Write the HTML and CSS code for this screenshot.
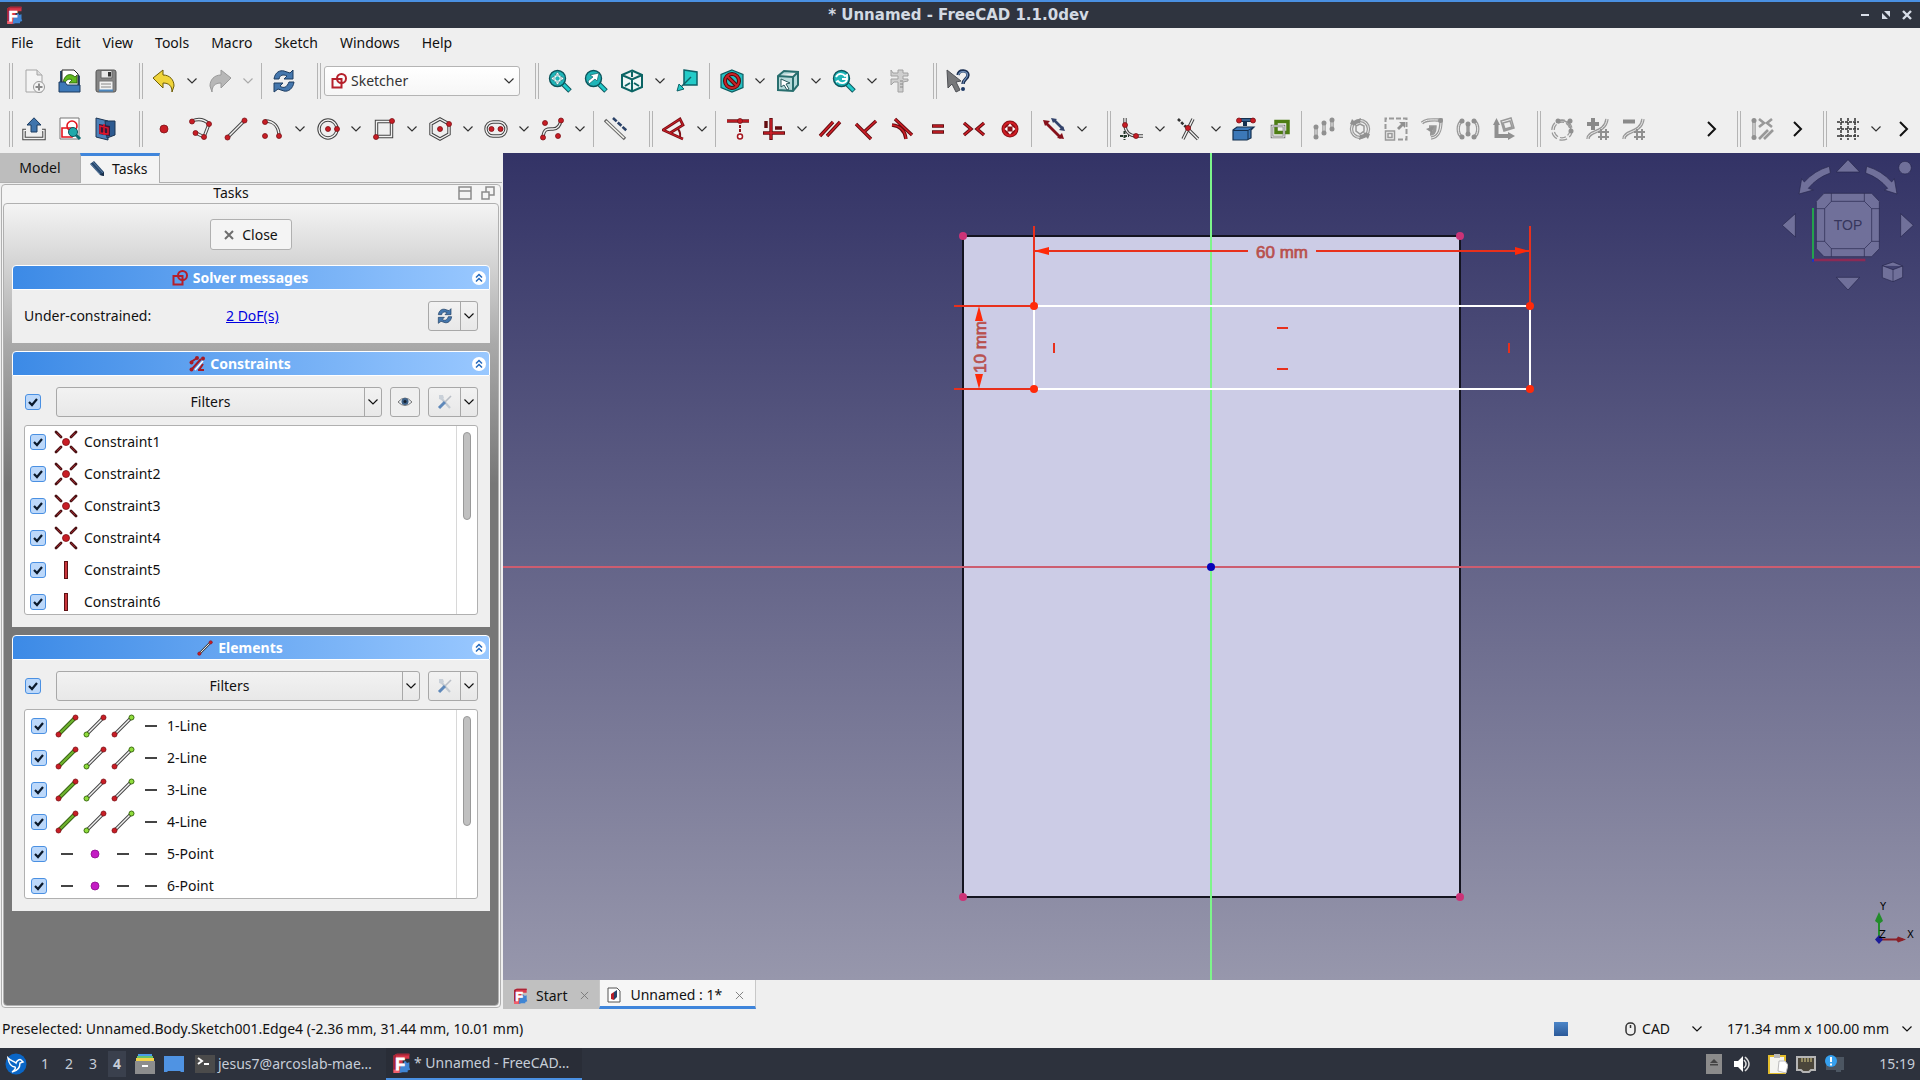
FILE: index.html
```
<!DOCTYPE html>
<html lang="en">

<head>
    <meta charset="UTF-8">
    <meta name="viewport" content="width=device-width, initial-scale=1.0">
    <title>* Unnamed - FreeCAD 1.1.0dev</title>
    <link rel="stylesheet" href="styles.css">
</head>

<body>

    <!-- Icon sprite -->
    <svg class="sprite" aria-hidden="true">
        <symbol id="i-chev" viewBox="0 0 12 12"><path d="M1.500 3.500l4.500 4.500 4.500-4.500" fill="none" stroke="currentColor" stroke-width="1.200"/></symbol>
        <symbol id="i-more" viewBox="0 0 16 18"><path d="M5 2l7 7-7 7" fill="none" stroke="#111" stroke-width="2"/></symbol>
        <symbol id="i-freecad" viewBox="0 0 24 24">
            <path d="M3 3l4-2h15v6h-8v15l-4 2H3z" fill="#d9364a"/><path d="M3 3l4-2h15v2H6v20H3z" fill="#a82636"/><path d="M12 13h3l1-3h2l1 2 3-1v6l1 3-3 1v2h-6l-4 1z" fill="#3f85d4"/><path d="M3 20h7v4H3z" fill="#f0606c"/>
            <text x="5" y="20" class="logo-letter">F</text>
        </symbol>
        <symbol id="i-new" viewBox="0 0 24 24"><path d="M4 1h11l5 5v17H4z" fill="#f4f4f4" stroke="#a5a5a5"/><path d="M15 1v5h5" fill="#ddd" stroke="#a5a5a5"/><circle cx="17" cy="18" r="5.500" fill="#f4f4f4" stroke="#999"/><path d="M17 14.500v7M13.500 18h7" stroke="#8a8a8a" stroke-width="2"/></symbol>
        <symbol id="i-open" viewBox="0 0 24 24"><path d="M2 2h14l6 5v16H2z" fill="#2b4d74"/><path d="M4 1h12l4 4v12H4z" fill="#fff" stroke="#222"/><path d="M5 14c1-8 7-11 12-6l2-2v8h-8l3-3c-3-2-6 0-7 3z" fill="#5fb81e" stroke="#285c08" stroke-width=".8"/><path d="M1 13h6l2 3h13v7H1z" fill="#3c78b8" stroke="#1c3a5e"/></symbol>
        <symbol id="i-save" viewBox="0 0 24 24"><path d="M2 3q0-2 2-2h16q2 0 2 2v18q0 2-2 2H4q-2 0-2-2z" fill="#858585" stroke="#555"/><path d="M7 1.500h11V9H7z" fill="#e8e8e8" stroke="#666"/><path d="M14 3h3v4.500h-3z" fill="#333"/><path d="M5 12h14v10H5z" fill="#f1f1f1" stroke="#777"/><path d="M7 15h10M7 18h10" stroke="#888"/><path d="M5 20.500h14v2H5z" fill="#4b86be"/></symbol>
        <symbol id="i-undo" viewBox="0 0 24 24"><path d="M1 9l10-8v5c7 0 11 5 11 11l-2 6c0-6-3-9-9-9v5z" fill="#f0d43a" stroke="#6d5c05"/></symbol>
        <symbol id="i-redo" viewBox="0 0 24 24"><path d="M23 9L13 1v5C6 6 2 11 2 17l2 6c0-6 3-9 9-9v5z" fill="#b7b7b7" stroke="#999"/></symbol>
        <symbol id="i-refresh" viewBox="0 0 24 24"><path d="M2 10c1-7 6-9 10-8l6 2 3-3v9h-9l3-3c-4-2-7-1-8 3z" fill="#4577ad" stroke="#1d3c61"/><path d="M22 13c-1 7-6 10-10 9l-6-2-4 3v-9h9l-3 3c4 3 7 1 9-4z" fill="#4577ad" stroke="#1d3c61"/></symbol>
        <symbol id="i-sketch" viewBox="0 0 16 16"><path d="M1.500 6h9v8.500h-9z" fill="none" stroke="#b51f2a" stroke-width="2"/><circle cx="10.500" cy="5.500" r="4.500" fill="none" stroke="#b51f2a" stroke-width="2"/></symbol>
        <symbol id="i-lens" viewBox="0 0 24 24"><path d="M14 14l8 8" stroke="#0b555c" stroke-width="5"/><path d="M14 14l7.500 7.500" stroke="#21c9c9" stroke-width="3"/><circle cx="9.500" cy="9.500" r="8" fill="#1fb5b8" stroke="#0b555c" stroke-width="1.400"/></symbol>
        <symbol id="i-fit" viewBox="0 0 24 24"><use href="#i-lens"/><circle cx="9.500" cy="9.500" r="3" fill="none" stroke="#fff" stroke-width="1.500"/><path d="M9.500 3l2.500 3H7zM9.500 16l2.500-3H7zM3 9.500L6 7v5zM16 9.500L13 7v5z" fill="#fff" stroke="#12656c" stroke-width=".6"/></symbol>
        <symbol id="i-fitsel" viewBox="0 0 24 24"><use href="#i-lens"/><path d="M5 15l-1-3 5-4-3-2 9-2-2 8-2-2z" fill="#fff" stroke="#12656c" stroke-width=".7"/></symbol>
        <symbol id="i-cube" viewBox="0 0 24 24"><path d="M12 1.500l10 4.500v12l-10 4.500L2 18V6zM2 6l10 4.500L22 6M12 10.500v12" fill="#eef6f6" stroke="#0b6464" stroke-width="2"/><path d="M12 3v5M5 17l5-3M19 17l-5-3" stroke="#0b6464" stroke-width="2"/></symbol>
        <symbol id="i-align" viewBox="0 0 24 24"><path d="M8 1l13 2v13H8z" fill="#23cbc8" stroke="#0e6268" stroke-width="1.500"/><path d="M15 8L4 19" stroke="#0e6268" stroke-width="1.500"/><path d="M1 22l2-7 5 5z" fill="#23cbc8" stroke="#0e6268"/></symbol>
        <symbol id="i-draw" viewBox="0 0 24 24"><path d="M12 1l11 4.500v13L12 23 1 18.500v-13z" fill="#25bfc2" stroke="#0b5c60" stroke-width="1.200"/><circle cx="12" cy="12" r="7" fill="none" stroke="#4d0809" stroke-width="4"/><path d="M7 7l10 10" stroke="#4d0809" stroke-width="4"/><circle cx="12" cy="12" r="7" fill="none" stroke="#c92228" stroke-width="2"/><path d="M7 7l10 10" stroke="#c92228" stroke-width="2"/></symbol>
        <symbol id="i-boxsel" viewBox="0 0 24 24"><path d="M2 7l6-5 14 1v13l-5 6-15-1zM2 7l15 1 5-5M17 8v14" fill="#b6dada" stroke="#286e6e" stroke-width="2"/><path d="M5 10l9 4-4 1 3 5-2 1-3-5-3 2z" fill="#fff" stroke="#27585b"/></symbol>
        <symbol id="i-zoom" viewBox="0 0 24 24"><use href="#i-lens"/><path d="M4 8c2-4 7-4 9-1l2-1v4h-5M15 11c-2 4-7 4-9 1l-2 1" fill="none" stroke="#fff" stroke-width="1.800"/></symbol>
        <symbol id="i-measure" viewBox="0 0 24 24"><path d="M3 1l2 3h5V1h5v3h5v3h-5v3h5v2l-5 1v10h-5V13H6l-3 3v-6h7V7H3z" fill="#cfcfcf" stroke="#a1a1a1"/><path d="M12 12h3M12 15h3M12 18h3" stroke="#888"/></symbol>
        <symbol id="i-what" viewBox="0 0 24 24"><path d="M1 1l14 11-5 1 4 8-4 2-4-8-4 4z" fill="#77787a" stroke="#4e5055"/><path d="M12 6c1-6 10-5 10 0 0 4-5 4-5 9" fill="none" stroke="#1b2f52" stroke-width="3.400"/><path d="M12.500 6c1-5 9-4 9 0 0 4-4.500 4-4.500 9" fill="none" stroke="#7494bd" stroke-width="1.200"/><circle cx="17" cy="20" r="2" fill="#1e3a66"/></symbol>

        <symbol id="i-leave" viewBox="0 0 24 24"><path class="rail" d="M4 13.500H2v8h20v-8h-2"/><path class="core" d="M4 13.500H2v8h20v-8h-2"/><path d="M12 .8l7 7.200h-4v7H9V8H5z" fill="#3f74ac" stroke="#1d3c61"/></symbol>
        <symbol id="i-viewsk" viewBox="0 0 24 24"><path d="M2 1h19v21H2z" fill="#fff" stroke="#777"/><path d="M4 11h10v9H4z" fill="none" stroke="#e5151d" stroke-width="1.600"/><circle cx="14" cy="9" r="5" fill="none" stroke="#e5151d" stroke-width="1.600"/><circle cx="15" cy="15" r="4.500" fill="#1fa9aa" stroke="#0b555c"/><path d="M18 18l4 4" stroke="#0b6d72" stroke-width="3"/></symbol>
        <symbol id="i-section" viewBox="0 0 24 24"><path d="M2 1l12 3v19L2 20z" fill="#4d80b8" stroke="#1c3453"/><path d="M11 4h10v14l-8 3z" fill="#2d5a90" stroke="#1c3453"/><path d="M5 7l11 2v10l-11-2z" fill="#3a1738"/><path d="M6 9l8 2v6l-8-1zM10 7v11" fill="none" stroke="#e1142a" stroke-width="1.500"/></symbol>
        <symbol id="i-point" viewBox="0 0 24 24"><circle class="dot" cx="12" cy="12" r="4"/></symbol>
        <symbol id="i-poly" viewBox="0 0 24 24"><path class="rail" d="M4 4c5-2 11-3 17 3l-5 13-8-4"/><path class="core" d="M4 4c5-2 11-3 17 3l-5 13-8-4"/><circle class="dot" cx="4" cy="4.500" r="2.500"/><circle class="dot" cx="21" cy="7" r="2.500"/><circle class="dot" cx="16" cy="20" r="2.500"/><circle class="dot" cx="7.500" cy="16" r="2.500"/></symbol>
        <symbol id="i-line" viewBox="0 0 24 24"><path class="rail" d="M4 20L20 4"/><path class="core" d="M4 20L20 4"/><circle class="dot" cx="3.500" cy="20.500" r="2.500"/><circle class="dot" cx="20.500" cy="3.500" r="2.500"/></symbol>
        <symbol id="i-arc" viewBox="0 0 24 24"><path class="rail" d="M5 4c9 0 14 6 14 15"/><path class="core" d="M5 4c9 0 14 6 14 15"/><circle class="dot" cx="5" cy="5" r="2.500"/><circle class="dot" cx="5" cy="19" r="2.500"/><circle class="dot" cx="19" cy="19" r="2.500"/></symbol>
        <symbol id="i-circle" viewBox="0 0 24 24"><circle class="rail" cx="12" cy="12" r="9"/><circle class="core" cx="12" cy="12" r="9"/><circle class="dot" cx="12" cy="12" r="2.500"/><circle class="dot" cx="21" cy="12" r="2.500"/></symbol>
        <symbol id="i-rect" viewBox="0 0 24 24"><path class="rail" d="M4.500 4.500h15v15h-15z"/><path class="core" d="M4.500 4.500h15v15h-15z"/><circle class="dot" cx="4" cy="20" r="2.500"/><circle class="dot" cx="20" cy="4" r="2.500"/></symbol>
        <symbol id="i-hexa" viewBox="0 0 24 24"><path class="rail" d="M12 2l9 5v10l-9 5-9-5V7z"/><path class="core" d="M12 2l9 5v10l-9 5-9-5V7z"/><circle class="dot" cx="12" cy="12" r="2.500"/><circle class="dot" cx="21" cy="7" r="2.500"/></symbol>
        <symbol id="i-slot" viewBox="0 0 24 24"><rect class="rail" x="2" y="5" width="20" height="14" rx="7"/><rect class="core" x="2" y="5" width="20" height="14" rx="7"/><circle class="dot" cx="7.500" cy="12" r="2.500"/><circle class="dot" cx="16.500" cy="12" r="2.500"/></symbol>
        <symbol id="i-spline" viewBox="0 0 24 24"><path class="rail" d="M3 20c1-9 5-8 10-8s7-3 8-9"/><path class="core" d="M3 20c1-9 5-8 10-8s7-3 8-9"/><circle class="dot" cx="3" cy="20.500" r="2.500"/><circle class="dot" cx="21" cy="3.500" r="2.500"/><circle class="dot" cx="5" cy="6" r="2.500"/><circle class="dot" cx="18" cy="19" r="2.500"/></symbol>
        <symbol id="i-constr" viewBox="0 0 24 24"><path d="M1 3l20 19" stroke="#666" stroke-width="3.400"/><path d="M2 4l18 17" stroke="#f4f4ee" stroke-width="1.600"/><path d="M9 1l14 13" stroke="#2b4268" stroke-width="2.600" stroke-dasharray="5 1.500"/></symbol>
        <symbol id="i-dim" viewBox="0 0 24 24"><path d="M21 22L1 13 18 2l3 6-13 8" fill="none" stroke="#7e1016" stroke-width="2.800"/><path d="M15 11q4 4 3 9" fill="none" stroke="#7e1016" stroke-width="2"/><path d="M21 22L1 13 18 2l3 6-13 8" fill="none" stroke="#cf1f27"/></symbol>
        <symbol id="i-coin" viewBox="0 0 24 24"><path class="rd" d="M1 4h22"/><path class="rr" d="M1 4h22"/><circle class="dot" cx="14" cy="4" r="2.500"/><path d="M14 8v8" stroke="#8a1118" stroke-width="2" stroke-dasharray="3 1"/><circle cx="14" cy="19.500" r="2.500" fill="#fff" stroke="#a51820" stroke-width="1.500"/></symbol>
        <symbol id="i-hv" viewBox="0 0 24 24"><path class="rd" d="M9 1v22M1 16h22M4 4v7M13 11h7"/><path class="rr" d="M9 2v20M2 16h20"/></symbol>
        <symbol id="i-para" viewBox="0 0 24 24"><path class="rd" d="M2 19L15 5M9 19L22 5"/><path class="rr" d="M2 19L15 5M9 19L22 5"/></symbol>
        <symbol id="i-perp" viewBox="0 0 24 24"><path class="rd" d="M2 7l15 15M10 15L22 4"/><path class="rr" d="M2 7l15 15M10 15L22 4"/></symbol>
        <symbol id="i-tan" viewBox="0 0 24 24"><path class="rd" d="M5 2l17 16M2 8c9 1 13 6 14 14"/><path class="rr" d="M5 2l17 16M2 8c9 1 13 6 14 14"/></symbol>
        <symbol id="i-equal" viewBox="0 0 24 24"><path class="rd" d="M6 9h12M6 15h12"/><path class="rr" d="M7 9h10M7 15h10"/></symbol>
        <symbol id="i-sym" viewBox="0 0 24 24"><path class="rd" d="M2 6l7 6-7 6M22 6l-7 6 7 6"/><path class="rr" d="M2 6l7 6-7 6M22 6l-7 6 7 6"/></symbol>
        <symbol id="i-block" viewBox="0 0 24 24"><circle cx="12" cy="12" r="8.500" fill="#8c1117"/><circle cx="12" cy="12" r="6.500" fill="none" stroke="#d31d25" stroke-width="1.800"/><path d="M12 6.500l2.500 3h-5zM12 17.500l2.500-3h-5zM6.500 12l3-2.500v5zM17.500 12l-3-2.500v5z" fill="#fff"/></symbol>
        <symbol id="i-toggle" viewBox="0 0 24 24"><path d="M4 6l15 15" stroke="#86101a" stroke-width="2.800"/><path d="M1 3l7 1-5 5zM22 22l-7-1 5-5z" fill="#86101a"/><path d="M12 3l9 9" stroke="#33436b" stroke-width="2.600"/><path d="M9 1l6 1-4 4zM23 14l-6-1 4-4z" fill="#33436b"/></symbol>
        <symbol id="i-fillet" viewBox="0 0 24 24"><path class="rail" d="M5 1v6c0 7 4 12 12 12h6"/><path class="core" d="M5 1v6c0 7 4 12 12 12h6"/><path d="M4.500 14v9M0 19h9" stroke="#263b2d" stroke-width="2" stroke-dasharray="3 1"/><circle class="dot" cx="5" cy="8" r="2.500"/><circle class="dot" cx="16" cy="19" r="2.500"/></symbol>
        <symbol id="i-trim" viewBox="0 0 24 24"><path class="rail" d="M7 22L17 2M12 12l10 10"/><path class="core" d="M7 22L17 2M12 12l10 10"/><path d="M2 2l8 8" stroke="#333" stroke-width="2.600" stroke-dasharray="3 1.500"/><circle class="dot" cx="12" cy="11" r="2.600"/></symbol>
        <symbol id="i-extern" viewBox="0 0 24 24"><path d="M1 13l4-3h17l-3 3v8l-4 2H1z" fill="#3c78b8" stroke="#15304f" stroke-width="1.200"/><path d="M1 13.500h15l5-3M16 14v8" fill="none" stroke="#15304f"/><path d="M8 3h14M13 3v6" stroke="#15304f" stroke-width="4"/><path d="M8 3h13" stroke="#5c93cd"/><circle class="dot" cx="7" cy="3.500" r="2.500"/><circle class="dot" cx="21" cy="3.500" r="2.500"/></symbol>
        <symbol id="i-carbon" viewBox="0 0 24 24"><path d="M8 4.500h12v11H8z" fill="none" stroke="#4d7d14" stroke-width="3.500"/><path d="M4 9h12v11H4z" fill="none" stroke="#777" stroke-width="2.600"/><path d="M4 9h12v11H4z" fill="none" stroke="#eee"/></symbol>

        <symbol id="i-array" viewBox="0 0 24 24"><path class="gl" d="M4 10v10M12 7v10M20 3v10"/><path d="M4 10v10M12 7v10M20 3v10" stroke="#eee"/><path class="gf" d="M1.500 10a2.500 2.500 0 1 0 5 0 2.500 2.500 0 1 0-5 0M1.500 20a2.500 2.500 0 1 0 5 0 2.500 2.500 0 1 0-5 0M9.500 6a2.500 2.500 0 1 0 5 0 2.500 2.500 0 1 0-5 0M9.500 16a2.500 2.500 0 1 0 5 0 2.500 2.500 0 1 0-5 0M17.500 3a2.500 2.500 0 1 0 5 0 2.500 2.500 0 1 0-5 0M17.500 12a2.500 2.500 0 1 0 5 0 2.500 2.500 0 1 0-5 0"/></symbol>
        <symbol id="i-rotate" viewBox="0 0 24 24"><circle class="gl" cx="12" cy="12" r="8.500"/><circle cx="12" cy="12" r="8.500" fill="none" stroke="#eee"/><path class="g1" d="M12 7l4 2v5l-4 3-4-3V9z"/><path class="gf" d="M2 7l2-5 2 2 7-3-1 5-4 1 1 2zM22 17l-2 5-2-2-7 3 1-5 4-1-1-2z"/></symbol>
        <symbol id="i-scale" viewBox="0 0 24 24"><path d="M1.500 12V1.500h21v21H14" fill="none" stroke="#999" stroke-width="2" stroke-dasharray="5 2"/><path class="g1" d="M1.500 14h9v9h-9zM4 16.500h4v4H4z"/><path class="gf" d="M13 11l4-4-2-2h6v6l-2-2-4 4z"/></symbol>
        <symbol id="i-offset" viewBox="0 0 24 24"><path class="gl" d="M2 6c4-4 10-3 19-3 0 8-1 17-10 18M9 10h6c0 4-1 7-5 7"/><path d="M2 6c4-4 10-3 19-3 0 8-1 17-10 18" fill="none" stroke="#eee"/><circle class="gf" cx="20.500" cy="3.500" r="2.500"/><path class="gf" d="M6 12l8-3-2 7z"/></symbol>
        <symbol id="i-mirror" viewBox="0 0 24 24"><path class="gl" d="M6 4c-5 3-5 13 0 16M18 4c5 3 5 13 0 16M12 7v10"/><path d="M6 4c-5 3-5 13 0 16M18 4c5 3 5 13 0 16" fill="none" stroke="#eee"/><circle class="gf" cx="6" cy="4" r="2.500"/><circle class="gf" cx="18" cy="4" r="2.500"/><circle class="gf" cx="12" cy="7" r="2.500"/><circle class="gf" cx="12" cy="17" r="2.500"/><circle class="gf" cx="6" cy="20" r="2.500"/><circle class="gf" cx="18" cy="20" r="2.500"/></symbol>
        <symbol id="i-axes" viewBox="0 0 24 24"><path d="M4.500 6v13H18" fill="none" stroke="#8f8f8f" stroke-width="4"/><path class="gf" d="M1 8l3.500-7L8 8zM16 15l7 4-7 4z"/><path class="g1" d="M9 4l10-3 3 10-10 3zM11 6l7-2 2 6-7 2z"/></symbol>
        <symbol id="i-pattern" viewBox="0 0 24 24"><circle cx="12" cy="13" r="9" fill="none" stroke="#999" stroke-width="3.600" stroke-dasharray="7 2.400"/><circle cx="12" cy="13" r="9" fill="none" stroke="#eee" stroke-width="1.200"/><path class="g1" d="M9 4c6-2 11 2 12 9"/><circle class="gf" cx="20" cy="4" r="2.500"/><circle class="gf" cx="8" cy="4" r="2.500"/><circle class="gf" cx="21" cy="14" r="2.500"/></symbol>
        <symbol id="i-knot" viewBox="0 0 24 24"><path class="gl" d="M2 22c0-9 17-5 19-20"/><path d="M2 22c0-9 17-5 19-20" fill="none" stroke="#eee"/><path d="M15 12v11M20 12v11M12 15h11M12 20h11" stroke="#909090" stroke-width="2"/></symbol>
        <symbol id="i-plus" viewBox="0 0 24 24"><use href="#i-knot"/><path d="M7 1v12M1 7h12" stroke="#8a8a8a" stroke-width="4"/></symbol>
        <symbol id="i-minus" viewBox="0 0 24 24"><use href="#i-knot"/><path d="M1 4.500h12" stroke="#8a8a8a" stroke-width="4"/></symbol>
        <symbol id="i-selcon" viewBox="0 0 24 24"><path class="gl" d="M4 4v16"/><path d="M4 4v16" stroke="#eee"/><circle class="gf" cx="4" cy="3.500" r="2.500"/><circle class="gf" cx="4" cy="20.500" r="2.500"/><path d="M9 2l5 4-5 4M22 2l-5 4 5 4M9 22l9-9M14 22l9-9" fill="none" stroke="#999" stroke-width="2.600"/></symbol>
        <symbol id="i-grid" viewBox="0 0 24 24"><path d="M5 1v22M12 1v22M19 1v22M1 5h22M1 12h22M1 19h22" stroke="#333" stroke-width="1.500" stroke-dasharray="3 1"/></symbol>

        <symbol id="i-pencil" viewBox="0 0 18 18"><path d="M2 4l4-3 10 11v4l-4-1z" fill="#27496f"/><path d="M3 4l9 10M5 2l10 11" stroke="#7191b5" stroke-width=".7"/><path d="M12 15l4-3v4z" fill="#1a2f48"/></symbol>
        <symbol id="i-cons" viewBox="0 0 16 16"><path d="M2 6L8 2M3 13l9-10M9 14h6M10 14l4-6" fill="none" stroke="#a51c26" stroke-width="2"/><path d="M6 14l8-9" stroke="#fff" stroke-width="1.500"/><circle cx="2.500" cy="6.500" r="2" fill="#a51c26"/><circle cx="8" cy="2" r="2" fill="#a51c26"/><circle cx="2.500" cy="13.500" r="2" fill="#a51c26"/><circle cx="14" cy="2.500" r="2" fill="#a51c26"/></symbol>
        <symbol id="i-fold" viewBox="0 0 14 14"><circle cx="7" cy="7" r="7" fill="#fff"/><path d="M4 6.500l3-3 3 3M4 10.500l3-3 3 3" fill="none" stroke="#2469bd" stroke-width="1.500"/></symbol>
        <symbol id="i-eye" viewBox="0 0 16 16"><path d="M1 8q7-8 14 0-7 7-14 0z" fill="#e8edf2" stroke="#777"/><circle cx="8" cy="7.500" r="3.500" fill="#3c5f86"/><circle cx="8" cy="7.500" r="1.500" fill="#15202e"/></symbol>
        <symbol id="i-tools" viewBox="0 0 16 16"><path d="M4 4l9 10" stroke="#c3cad2" stroke-width="2.200"/><path d="M2 1v4l3 1 2-2-1-3" fill="#c9d0d8"/><path d="M2 14l6-6" stroke="#5e88ba" stroke-width="3"/><path d="M8 8l6-6" stroke="#b9bec6" stroke-width="1.600"/></symbol>
        <symbol id="i-coincident" viewBox="0 0 24 24"><path d="M2 2l5 5M22 2l-5 5M2 22l5-5M22 22l-5-5" stroke="#4a1113" stroke-width="2.800" stroke-linecap="round"/><path d="M3 3l4 4M21 3l-4 4M3 21l4-4M21 21l-4-4" stroke="#9b2228"/><circle class="dot" cx="12" cy="12" r="3.500"/></symbol>
        <symbol id="i-vert" viewBox="0 0 24 24"><path d="M12 3v18" stroke="#5d1114" stroke-width="4"/><path d="M12 4v16" stroke="#c8353b" stroke-width="2"/></symbol>
        <symbol id="i-edge" viewBox="0 0 24 24"><path d="M4 20L20 4" stroke="#3a6416" stroke-width="4"/><path d="M4 20L20 4" stroke="#6fb52c" stroke-width="2"/><circle class="dot" cx="3.500" cy="20.500" r="2.500"/><circle class="dot" cx="20.500" cy="3.500" r="2.500"/></symbol>
        <symbol id="i-start" viewBox="0 0 24 24"><path class="rail" d="M4 20L20 4"/><path class="core" d="M4 20L20 4"/><circle class="green" cx="3.500" cy="20.500" r="2.500"/><circle class="dot" cx="20.500" cy="3.500" r="2.500"/></symbol>
        <symbol id="i-end" viewBox="0 0 24 24"><path class="rail" d="M4 20L20 4"/><path class="core" d="M4 20L20 4"/><circle class="dot" cx="3.500" cy="20.500" r="2.500"/><circle class="green" cx="20.500" cy="3.500" r="2.500"/></symbol>
        <symbol id="i-none" viewBox="0 0 24 24"><path d="M6 12h12" stroke="#444" stroke-width="2"/></symbol>
        <symbol id="i-pt" viewBox="0 0 24 24"><circle cx="12" cy="12" r="4" fill="#c41cc4" stroke="#8d0c8d" stroke-width=".8"/></symbol>
        <symbol id="i-x" viewBox="0 0 10 10"><path d="M1 1l8 8M9 1L1 9" fill="none" stroke="currentColor"/></symbol>
    </svg>

    <header class="titlebar">
        <svg class="app-icon"><use href="#i-freecad"/></svg>
        <h1>* Unnamed - FreeCAD 1.1.0dev</h1>
        <div class="window-buttons">
            <button type="button" aria-label="Minimize"><svg viewBox="0 0 10 10"><path d="M1 5h8" stroke="#d8dee8" stroke-width="2"/></svg></button>
            <button type="button" aria-label="Restore"><svg viewBox="0 0 10 10"><path d="M3 1h6v6zM1 3v6h6z" fill="#d8dee8"/></svg></button>
            <button type="button" aria-label="Close window"><svg viewBox="0 0 10 10"><path d="M1 1l8 8M9 1L1 9" stroke="#d8dee8" stroke-width="2.400"/></svg></button>
        </div>
    </header>

    <nav class="menubar">
        <button type="button">File</button>
        <button type="button">Edit</button>
        <button type="button">View</button>
        <button type="button">Tools</button>
        <button type="button">Macro</button>
        <button type="button">Sketch</button>
        <button type="button">Windows</button>
        <button type="button">Help</button>
    </nav>

    <div class="toolbar">
        <div class="group">
            <button class="tool" aria-label="New"><svg><use href="#i-new"/></svg></button>
            <button class="tool" aria-label="Open"><svg><use href="#i-open"/></svg></button>
            <button class="tool" aria-label="Save"><svg><use href="#i-save"/></svg></button>
        </div>
        <div class="group">
            <button class="tool" aria-label="Undo"><svg><use href="#i-undo"/></svg></button>
            <button class="drop" aria-label="Undo list"><svg><use href="#i-chev"/></svg></button>
            <button class="tool" aria-label="Redo" disabled><svg><use href="#i-redo"/></svg></button>
            <button class="drop" aria-label="Redo list" disabled><svg><use href="#i-chev"/></svg></button>
            <span class="sep"></span>
            <button class="tool" aria-label="Refresh"><svg><use href="#i-refresh"/></svg></button>
        </div>
        <div class="group">
            <label class="workbench">
                <svg class="workbench-icon"><use href="#i-sketch"/></svg>
                <select aria-label="Workbench">
                    <option>Sketcher</option>
                </select>
                <svg class="workbench-arrow"><use href="#i-chev"/></svg>
            </label>
        </div>
        <div class="group">
            <button class="tool" aria-label="Fit all"><svg><use href="#i-fit"/></svg></button>
            <button class="tool" aria-label="Fit selection"><svg><use href="#i-fitsel"/></svg></button>
            <button class="tool" aria-label="Isometric"><svg><use href="#i-cube"/></svg></button>
            <button class="drop" aria-label="Standard views"><svg><use href="#i-chev"/></svg></button>
            <button class="tool" aria-label="Align to selection"><svg><use href="#i-align"/></svg></button>
            <span class="sep"></span>
            <button class="tool" aria-label="Draw style"><svg><use href="#i-draw"/></svg></button>
            <button class="drop" aria-label="Draw styles"><svg><use href="#i-chev"/></svg></button>
            <button class="tool" aria-label="Selection"><svg><use href="#i-boxsel"/></svg></button>
            <button class="drop" aria-label="Selection filters"><svg><use href="#i-chev"/></svg></button>
            <button class="tool" aria-label="Sync view"><svg><use href="#i-zoom"/></svg></button>
            <button class="drop" aria-label="Sync options"><svg><use href="#i-chev"/></svg></button>
            <button class="tool" aria-label="Measure" disabled><svg><use href="#i-measure"/></svg></button>
        </div>
        <div class="group">
            <button class="tool" aria-label="What's this?"><svg><use href="#i-what"/></svg></button>
        </div>
    </div>

    <div class="toolbar">
        <div class="group">
            <button class="tool" aria-label="Leave sketch"><svg><use href="#i-leave"/></svg></button>
            <button class="tool" aria-label="View sketch"><svg><use href="#i-viewsk"/></svg></button>
            <button class="tool" aria-label="View section"><svg><use href="#i-section"/></svg></button>
        </div>
        <div class="group">
            <button class="tool" aria-label="Point"><svg><use href="#i-point"/></svg></button>
            <button class="tool" aria-label="Polyline"><svg><use href="#i-poly"/></svg></button>
            <button class="tool" aria-label="Line"><svg><use href="#i-line"/></svg></button>
            <button class="tool" aria-label="Arc"><svg><use href="#i-arc"/></svg></button>
            <button class="drop" aria-label="Arcs"><svg><use href="#i-chev"/></svg></button>
            <button class="tool" aria-label="Circle"><svg><use href="#i-circle"/></svg></button>
            <button class="drop" aria-label="Circles"><svg><use href="#i-chev"/></svg></button>
            <button class="tool" aria-label="Rectangle"><svg><use href="#i-rect"/></svg></button>
            <button class="drop" aria-label="Rectangles"><svg><use href="#i-chev"/></svg></button>
            <button class="tool" aria-label="Hexagon"><svg><use href="#i-hexa"/></svg></button>
            <button class="drop" aria-label="Polygons"><svg><use href="#i-chev"/></svg></button>
            <button class="tool" aria-label="Slot"><svg><use href="#i-slot"/></svg></button>
            <button class="drop" aria-label="Slots"><svg><use href="#i-chev"/></svg></button>
            <button class="tool" aria-label="B-spline"><svg><use href="#i-spline"/></svg></button>
            <button class="drop" aria-label="B-splines"><svg><use href="#i-chev"/></svg></button>
            <span class="sep"></span>
            <button class="tool" aria-label="Toggle construction"><svg><use href="#i-constr"/></svg></button>
        </div>
        <div class="group">
            <button class="tool" aria-label="Dimension"><svg><use href="#i-dim"/></svg></button>
            <button class="drop" aria-label="Dimensions"><svg><use href="#i-chev"/></svg></button>
            <span class="sep"></span>
            <button class="tool" aria-label="Coincident"><svg><use href="#i-coin"/></svg></button>
            <button class="tool" aria-label="Horizontal or vertical"><svg><use href="#i-hv"/></svg></button>
            <button class="drop" aria-label="Horizontal, vertical"><svg><use href="#i-chev"/></svg></button>
            <button class="tool" aria-label="Parallel"><svg><use href="#i-para"/></svg></button>
            <button class="tool" aria-label="Perpendicular"><svg><use href="#i-perp"/></svg></button>
            <button class="tool" aria-label="Tangent"><svg><use href="#i-tan"/></svg></button>
            <button class="tool" aria-label="Equal"><svg><use href="#i-equal"/></svg></button>
            <button class="tool" aria-label="Symmetric"><svg><use href="#i-sym"/></svg></button>
            <button class="tool" aria-label="Block"><svg><use href="#i-block"/></svg></button>
            <span class="sep"></span>
            <button class="tool" aria-label="Toggle driving"><svg><use href="#i-toggle"/></svg></button>
            <button class="drop" aria-label="Toggle constraints"><svg><use href="#i-chev"/></svg></button>
        </div>
        <div class="group">
            <button class="tool" aria-label="Fillet"><svg><use href="#i-fillet"/></svg></button>
            <button class="drop" aria-label="Fillets"><svg><use href="#i-chev"/></svg></button>
            <button class="tool" aria-label="Trim"><svg><use href="#i-trim"/></svg></button>
            <button class="drop" aria-label="Edit edges"><svg><use href="#i-chev"/></svg></button>
            <button class="tool" aria-label="External geometry"><svg><use href="#i-extern"/></svg></button>
            <button class="tool" aria-label="Carbon copy"><svg><use href="#i-carbon"/></svg></button>
            <span class="sep"></span>
            <button class="tool" aria-label="Array" disabled><svg><use href="#i-array"/></svg></button>
            <button class="tool" aria-label="Rotate" disabled><svg><use href="#i-rotate"/></svg></button>
            <button class="tool" aria-label="Scale" disabled><svg><use href="#i-scale"/></svg></button>
            <button class="tool" aria-label="Offset" disabled><svg><use href="#i-offset"/></svg></button>
            <button class="tool" aria-label="Mirror" disabled><svg><use href="#i-mirror"/></svg></button>
            <button class="tool" aria-label="Remove axes alignment" disabled><svg><use href="#i-axes"/></svg></button>
        </div>
        <div class="group grow">
            <button class="tool" aria-label="Convert to B-spline" disabled><svg><use href="#i-pattern"/></svg></button>
            <button class="tool" aria-label="Increase degree" disabled><svg><use href="#i-plus"/></svg></button>
            <button class="tool" aria-label="Decrease degree" disabled><svg><use href="#i-minus"/></svg></button>
            <button class="more" aria-label="More"><svg><use href="#i-more"/></svg></button>
        </div>
        <div class="group">
            <button class="tool" aria-label="Select constraints" disabled><svg><use href="#i-selcon"/></svg></button>
            <button class="more" aria-label="More"><svg><use href="#i-more"/></svg></button>
        </div>
        <div class="group">
            <button class="tool" aria-label="Grid"><svg><use href="#i-grid"/></svg></button>
            <button class="drop" aria-label="Grid options"><svg><use href="#i-chev"/></svg></button>
            <button class="more" aria-label="More"><svg><use href="#i-more"/></svg></button>
        </div>
    </div>

    <main class="workspace">
        <aside class="side">
            <div class="side-tabs">
                <button type="button" class="side-tab">Model</button>
                <button type="button" class="side-tab active"><svg><use href="#i-pencil"/></svg>Tasks</button>
            </div>
            <div class="dock">
                <div class="dock-title">
                    <span>Tasks</span>
                    <button type="button" aria-label="Overlay"><svg viewBox="0 0 14 14"><path d="M1 1h12v12H1zM1 5h12" fill="none" stroke="#8a8a8a" stroke-width="1.500"/></svg></button>
                    <button type="button" aria-label="Float"><svg viewBox="0 0 14 14"><path d="M5 1h8v8H5z" fill="none" stroke="#8a8a8a" stroke-width="1.500"/><path d="M1 6h7v7H1z" fill="#f4f4f4" stroke="#8a8a8a" stroke-width="1.500"/></svg></button>
                </div>
                <div class="tasks">
                    <button type="button" class="close-task"><svg viewBox="0 0 10 10"><path d="M1 1l8 8M9 1L1 9" stroke="#6d6d6d" stroke-width="2"/></svg>Close</button>

                    <section class="task">
                        <h2><svg><use href="#i-sketch"/></svg>Solver messages<button type="button" class="fold" aria-label="Collapse"><svg><use href="#i-fold"/></svg></button></h2>
                        <div class="task-body solver">
                            <span>Under-constrained:</span>
                            <a href="#">2 DoF(s)</a>
                            <div class="split">
                                <button type="button" class="icon-part" aria-label="Update"><svg><use href="#i-refresh"/></svg></button>
                                <button type="button" class="arrow-part" aria-label="Update options"><svg><use href="#i-chev"/></svg></button>
                            </div>
                        </div>
                    </section>

                    <section class="task">
                        <h2><svg><use href="#i-cons"/></svg>Constraints<button type="button" class="fold" aria-label="Collapse"><svg><use href="#i-fold"/></svg></button></h2>
                        <div class="task-body">
                            <div class="filter-row">
                                <input type="checkbox" class="check" aria-label="Filter constraints" checked>
                                <div class="split wide">
                                    <button type="button" class="text-part">Filters</button>
                                    <button type="button" class="arrow-part" aria-label="Filter list"><svg><use href="#i-chev"/></svg></button>
                                </div>
                                <button type="button" class="eye" aria-label="Show or hide"><svg><use href="#i-eye"/></svg></button>
                                <div class="split">
                                    <button type="button" class="icon-part" aria-label="Settings"><svg><use href="#i-tools"/></svg></button>
                                    <button type="button" class="arrow-part" aria-label="Settings list"><svg><use href="#i-chev"/></svg></button>
                                </div>
                            </div>
                            <div class="list">
                                <ul class="constraints">
                                    <li><label><input type="checkbox" class="check" checked><svg><use href="#i-coincident"/></svg>Constraint1</label></li>
                                    <li><label><input type="checkbox" class="check" checked><svg><use href="#i-coincident"/></svg>Constraint2</label></li>
                                    <li><label><input type="checkbox" class="check" checked><svg><use href="#i-coincident"/></svg>Constraint3</label></li>
                                    <li><label><input type="checkbox" class="check" checked><svg><use href="#i-coincident"/></svg>Constraint4</label></li>
                                    <li><label><input type="checkbox" class="check" checked><svg><use href="#i-vert"/></svg>Constraint5</label></li>
                                    <li><label><input type="checkbox" class="check" checked><svg><use href="#i-vert"/></svg>Constraint6</label></li>
                                </ul>
                                <div class="scroll"><span class="thumb"></span></div>
                            </div>
                        </div>
                    </section>

                    <section class="task">
                        <h2><svg><use href="#i-line"/></svg>Elements<button type="button" class="fold" aria-label="Collapse"><svg><use href="#i-fold"/></svg></button></h2>
                        <div class="task-body">
                            <div class="filter-row">
                                <input type="checkbox" class="check" aria-label="Filter elements" checked>
                                <div class="split wide">
                                    <button type="button" class="text-part">Filters</button>
                                    <button type="button" class="arrow-part" aria-label="Filter list"><svg><use href="#i-chev"/></svg></button>
                                </div>
                                <div class="split">
                                    <button type="button" class="icon-part" aria-label="Settings"><svg><use href="#i-tools"/></svg></button>
                                    <button type="button" class="arrow-part" aria-label="Settings list"><svg><use href="#i-chev"/></svg></button>
                                </div>
                            </div>
                            <div class="list">
                                <ul class="elements">
                                    <li><label><input type="checkbox" class="check" checked><svg><use href="#i-edge"/></svg><svg><use href="#i-start"/></svg><svg><use href="#i-end"/></svg><svg><use href="#i-none"/></svg>1-Line</label></li>
                                    <li><label><input type="checkbox" class="check" checked><svg><use href="#i-edge"/></svg><svg><use href="#i-start"/></svg><svg><use href="#i-end"/></svg><svg><use href="#i-none"/></svg>2-Line</label></li>
                                    <li><label><input type="checkbox" class="check" checked><svg><use href="#i-edge"/></svg><svg><use href="#i-start"/></svg><svg><use href="#i-end"/></svg><svg><use href="#i-none"/></svg>3-Line</label></li>
                                    <li><label><input type="checkbox" class="check" checked><svg><use href="#i-edge"/></svg><svg><use href="#i-start"/></svg><svg><use href="#i-end"/></svg><svg><use href="#i-none"/></svg>4-Line</label></li>
                                    <li><label><input type="checkbox" class="check" checked><svg><use href="#i-none"/></svg><svg><use href="#i-pt"/></svg><svg><use href="#i-none"/></svg><svg><use href="#i-none"/></svg>5-Point</label></li>
                                    <li><label><input type="checkbox" class="check" checked><svg><use href="#i-none"/></svg><svg><use href="#i-pt"/></svg><svg><use href="#i-none"/></svg><svg><use href="#i-none"/></svg>6-Point</label></li>
                                </ul>
                                <div class="scroll"><span class="thumb long"></span></div>
                            </div>
                        </div>
                    </section>
                </div>
            </div>
        </aside>

        <div class="documents">
            <div class="viewport">
                <svg class="scene" viewBox="503 153 1417 827" preserveAspectRatio="xMidYMid slice">
                    <rect x="963" y="236" width="497" height="661" fill="#cccce6" stroke="#141420" stroke-width="2"/>
                    <path d="M0 567h2400" stroke="#cc5d70" stroke-width="2"/>
                    <path d="M1211 0v1200" stroke="#7df58a" stroke-width="2"/>
                    <path d="M1034 306h496v83h-496z" fill="none" stroke="#fff" stroke-width="2"/>
                    <g stroke="#e8301c" stroke-width="2">
                        <path d="M1034 226v80M1530 226v80M1034 251h214M1316 251h214M954 306h80M954 389h80"/>
                        <path d="M1277 328h11M1277 369h11M1054 343v10M1509 343v10"/>
                    </g>
                    <path d="M1034 251l15-4v8zM1530 251l-15-4v8zM979 306l-4 15h8zM979 389l-4-15h8z" fill="#ff2a0a"/>
                    <text class="dimension" x="1282" y="258">60 mm</text>
                    <text class="dimension" x="0" y="0" transform="translate(986 347) rotate(-90)">10 mm</text>
                    <g fill="#cc3377"><circle cx="963" cy="236" r="4"/><circle cx="1460" cy="236" r="4"/><circle cx="963" cy="897" r="4"/><circle cx="1460" cy="897" r="4"/></g>
                    <g fill="#ff2a0a"><circle cx="1034" cy="306" r="4"/><circle cx="1530" cy="306" r="4"/><circle cx="1034" cy="389" r="4"/><circle cx="1530" cy="389" r="4"/></g>
                    <circle cx="1211" cy="567" r="4" fill="#0505b8"/>
                </svg>

                <!-- Navigation cube -->
                <svg class="navcube" viewBox="0 9 540 441">
                    <g fill="#70709a" stroke="#25254c" stroke-width="2">
                        <path d="M324 29l35 37h-70zM324 420l35-38h-70zM127 226l39-35v70zM520 226l-38-35v70z"/>
                        <circle cx="495" cy="53" r="19"/>
                        <path d="M268 49l3 20q-40 14-66 46l15 5-43 12 8-46 8 10q30-34 75-47zM380 49l-3 20q40 14 66 46l-10 5 38 12-8-46-8 10q-30-34-75-47z"/>
                        <path d="M252 130h143l23 24v142l-23 24H252l-23-24V154z"/>
                        <path d="M274 154h99l22 22v98l-22 22h-99l-20-22v-98zM274 130v24M373 130v24M274 296v24M373 296v24M229 176h25M229 274h25M395 176h23M395 274h23"/>
                        <path d="M427 347l32-11 29 12v34l-29 13-32-12zM427 347l32 12 29-11M459 359v36"/>
                    </g>
                    <text class="cube-face" x="324" y="240">TOP</text>
                    <path d="M219 174v154" stroke="#24a24d" stroke-width="6"/>
                    <path d="M222 330h154" stroke="#8c2a55" stroke-width="8"/>
                    <path d="M219 326v9" stroke="#1833cc" stroke-width="6"/>
                </svg>

                <!-- Axis cross -->
                <svg class="axis" viewBox="0 0 44 44">
                    <path d="M11 35V13" stroke="#238c2b" stroke-width="2"/><path d="M11 7l4 9-4 3-4-3z" fill="#238c2b"/>
                    <path d="M11 34.500h24" stroke="#8b2028" stroke-width="2"/><path d="M38 34.500l-8-3-2 3 2 3z" fill="#8b2028"/>
                    <path d="M11 30l4 4.500-4 4.500-4-4.500z" fill="#1c1c9a"/>
                    <text x="12" y="5">Y</text>
                    <text x="11" y="33">Z</text>
                    <text x="39" y="33">X</text>
                </svg>
            </div>
            <div class="doc-tabs">
                <div class="doc-tab"><svg class="doc-icon"><use href="#i-freecad"/></svg><a href="#">Start</a><button type="button" aria-label="Close Start"><svg><use href="#i-x"/></svg></button></div>
                <div class="doc-tab active"><svg class="doc-icon" viewBox="0 0 16 16"><path d="M2 1h9l3 3v11H2z" fill="#fff" stroke="#555"/><path d="M5 7l3-2v8l-3-1z" fill="#b51f2a"/><path d="M8 5l3-2v7l-3 3z" fill="#27426b"/></svg><a href="#">Unnamed : 1*</a><button type="button" aria-label="Close Unnamed"><svg><use href="#i-x"/></svg></button></div>
            </div>
        </div>
    </main>

    <footer class="statusbar">
        <span class="message">Preselected: Unnamed.Body.Sketch001.Edge4 (-2.36 mm, 31.44 mm, 10.01 mm)</span>
        <button type="button" class="notify" aria-label="Notifications"></button>
        <button type="button" class="nav-style"><svg class="mouse" viewBox="0 0 12 14"><rect x="2" y="1" width="9" height="12" rx="4" fill="none" stroke="#333" stroke-width="1.500"/><path d="M6.500 3v3" stroke="#333" stroke-width="1.500"/></svg>CAD<svg class="chev"><use href="#i-chev"/></svg></button>
        <button type="button" class="size">171.34 mm x 100.00 mm<svg class="chev"><use href="#i-chev"/></svg></button>
    </footer>

    <div class="taskbar">
        <button type="button" class="launcher" aria-label="Applications"><svg viewBox="0 0 22 22"><circle cx="11" cy="11" r="10.500" fill="#0a66c6"/><path d="M3 5c3 3 6 3 8 5 1-3 4-4 5-3l2 2-3 1c0 5-3 8-8 9 3-2 4-4 3-5-4 0-6-3-7-9z" fill="none" stroke="#fff" stroke-width="1.500"/></svg></button>
        <button type="button" class="desk">1</button>
        <button type="button" class="desk">2</button>
        <button type="button" class="desk">3</button>
        <button type="button" class="desk current">4</button>
        <button type="button" class="quick" aria-label="Files"><svg viewBox="0 0 20 20"><path d="M3 0h14v3H3z" fill="#4a9be8"/><path d="M2 2h16v3H2z" fill="#67c26b"/><path d="M1 4h18v4H1z" fill="#f2d24b"/><path d="M0 7h20v13H0z" fill="#8d8d8d"/><path d="M7 12h6" stroke="#fff" stroke-width="2"/></svg></button>
        <button type="button" class="quick" aria-label="Show desktop"><svg viewBox="0 0 20 20"><path d="M0 2h20v16h-3l-1-1H4l-1 1H0z" fill="#4f93e3"/></svg></button>
        <button type="button" class="window"><svg viewBox="0 0 20 20"><path d="M0 1h20v18H0z" fill="#4b4b4b"/><path d="M3 4l4 3-4 3M9 10h5" fill="none" stroke="#fff" stroke-width="2"/></svg>jesus7@arcoslab-mae…</button>
        <button type="button" class="window focused"><svg><use href="#i-freecad"/></svg>* Unnamed - FreeCAD…</button>
        <div class="tray">
            <button type="button" aria-label="Removable media"><svg viewBox="0 0 20 20"><path d="M2 0h16v20H2z" fill="#8b8b8b"/><path d="M10 5l4 4H6zM6 10h8v1.500H6z" fill="#444"/></svg></button>
            <button type="button" aria-label="Volume"><svg viewBox="0 0 20 20"><path d="M2 7h4l5-5v16l-5-5H2z" fill="#fff"/><path d="M12 6q4 4 0 8M13 3q8 7 0 14" fill="none" stroke="#ddd" stroke-width="1.500"/></svg></button>
            <button type="button" class="clip" aria-label="Clipboard"><svg viewBox="0 0 20 20"><path d="M1 2h16v18H1z" fill="#f4f4f0" stroke="#e3bd2c" stroke-width="2"/><path d="M6 0h6v4H6z" fill="#b9b9b9"/><path d="M11 7h6l3 4-2 8-8-2z" fill="#fff" stroke="#bbb"/></svg></button>
            <button type="button" aria-label="Network"><svg viewBox="0 0 20 20"><path d="M1 3h18v13h-4l-2 2H7l-2-2H1z" fill="#4b463b" stroke="#b5b5b5" stroke-width="2"/><path d="M6 4v4M9 4v4M12 4v4M15 4v4" stroke="#ddd08a"/></svg></button>
            <button type="button" aria-label="Updates"><svg viewBox="0 0 20 20"><path d="M2 3h18v13h-3v2h-5v-2H2z" fill="#4c5662"/><circle cx="7" cy="7" r="6" fill="#35a0ef"/><path d="M7 3v5M7 9.500v2" stroke="#fff" stroke-width="2"/></svg></button>
            <time>15:19</time>
        </div>
    </div>

</body>

</html>
```
FILE: styles.css
```
* {
    box-sizing: border-box;
}

body {
    margin: 0;
    min-height: 100vh;
    display: flex;
    flex-direction: column;
    font-family: "Noto Sans", "Open Sans", sans-serif;
    font-size: 14px;
    line-height: 20px;
    color: #111;
    background-color: #efefef;
}

button {
    display: flex;
    align-items: center;
    justify-content: center;
    padding: 0;
    border: none;
    background: none;
    font: inherit;
    color: inherit;
}

.sprite {
    display: none;
}

/* Shared strokes of the icons */
.rail {
    fill: none;
    stroke: #444;
    stroke-width: 3.4;
}

.core {
    fill: none;
    stroke: #f2f2f2;
    stroke-width: 1.4;
}

.dot {
    fill: #c81d25;
    stroke: #7c1117;
    stroke-width: 0.8;
}

.green {
    fill: #8fdc3c;
    stroke: #3c6e10;
}

.rd {
    fill: none;
    stroke: #640c10;
    stroke-width: 3.4;
}

.rr {
    fill: none;
    stroke: #cf1f27;
    stroke-width: 1.6;
}

.gl {
    fill: none;
    stroke: #999;
    stroke-width: 3.4;
}

.g1 {
    fill: none;
    stroke: #999;
    stroke-width: 1.5;
}

.gf {
    fill: #909090;
}

.logo-letter {
    font: bold 19px "Liberation Sans", sans-serif;
    fill: #fff;
    stroke: #fff;
}

/* Title bar */
.titlebar {
    display: grid;
    grid-template-columns: 1fr auto 1fr;
    align-items: center;
    height: 28px;
    padding: 0 8px 0 5px;
    border-top: 2px solid #4a90e2;
    background-color: #2f343f;
    color: #d3dae3;
}

.titlebar h1 {
    margin: 0;
    font: bold 15px "DejaVu Sans", sans-serif;
}

.app-icon {
    width: 18px;
    height: 18px;
}

.window-buttons {
    display: flex;
    justify-content: flex-end;
    gap: 11px;
}

.window-buttons svg {
    width: 10px;
    height: 10px;
}

/* Menu and toolbars */
.menubar {
    display: flex;
    gap: 22px;
    height: 29px;
    padding: 0 11px;
}

.toolbar {
    display: flex;
    gap: 12px;
    height: 48px;
    padding: 0 6px;
}

.group {
    display: flex;
    align-items: center;
}

.group::before {
    content: "";
    width: 2px;
    height: 36px;
    margin: 0 3px;
    border: solid #b4b4b4;
    border-width: 0 1px;
}

.grow {
    flex: 1;
}

.grow .more {
    margin-left: auto;
}

.tool {
    width: 36px;
    height: 36px;
}

.tool svg {
    width: 24px;
    height: 24px;
}

.drop {
    width: 20px;
    height: 36px;
    color: #333;
}

.drop:disabled {
    color: #aaa;
}

.drop svg,
.arrow-part svg,
.chev,
.workbench-arrow {
    width: 12px;
    height: 12px;
}

.more {
    width: 22px;
    height: 36px;
    margin-left: 6px;
}

.more svg {
    width: 16px;
    height: 18px;
}

.sep {
    width: 1px;
    height: 36px;
    margin: 0 4px 0 3px;
    background-color: #b4b4b4;
}

.workbench {
    position: relative;
    width: 196px;
}

.workbench select {
    appearance: none;
    width: 100%;
    height: 30px;
    padding: 0 26px;
    border: 1px solid #b4b4b4;
    border-radius: 3px;
    background: linear-gradient(#fff, #f6f6f6);
    font: inherit;
    color: #333;
}

.workbench-icon {
    position: absolute;
    left: 7px;
    top: 7px;
    width: 16px;
    height: 16px;
}

.workbench-arrow {
    position: absolute;
    right: 5px;
    top: 9px;
    color: #333;
}

/* Workspace */
.workspace {
    flex: 1;
    display: flex;
}

.side {
    flex: 0 0 503px;
    display: flex;
    flex-direction: column;
    padding-right: 1px;
}

.side-tabs {
    display: flex;
    height: 30px;
    border-bottom: 1px solid #b0b0b0;
}

.side-tab {
    width: 80px;
    height: 29px;
    background-color: #bdbdbd;
}

.side-tab.active {
    justify-content: flex-start;
    gap: 6px;
    height: 30px;
    padding: 0 0 2px 7px;
    border: 1px solid #b0b0b0;
    border-width: 0 1px;
    border-top: 3px solid #3f85db;
    background-color: #f4f4f4;
}

.side-tab svg {
    width: 18px;
    height: 18px;
}

.dock {
    flex: 1;
    display: flex;
    flex-direction: column;
    margin: 1px;
    padding: 0 1px 1px;
    border: 1px solid #b0b0b0;
    border-radius: 4px;
    background-color: #f4f4f4;
}

.dock-title {
    display: flex;
    align-items: center;
    gap: 9px;
    height: 18px;
    padding: 0 4px 2px 10px;
}

.dock-title span {
    flex: 1;
    text-align: center;
}

.dock-title svg {
    width: 14px;
    height: 14px;
}

.tasks {
    flex: 1;
    display: flex;
    flex-direction: column;
    gap: 8px;
    padding: 15px 8px;
    border: 1px solid #b0b0b0;
    border-radius: 4px;
    background: linear-gradient(#f4f4f4, #a9a9a9 140px, #777 280px);
}

.close-task {
    align-self: center;
    gap: 8px;
    width: 82px;
    height: 31px;
    margin-bottom: 7px;
    border: 1px solid #b0b0b0;
    border-radius: 3px;
    background-color: #f4f4f4;
}

.close-task svg {
    width: 10px;
    height: 10px;
}

.task h2 {
    display: flex;
    align-items: center;
    justify-content: center;
    gap: 5px;
    height: 25px;
    margin: 0;
    padding-right: 3px;
    border: 1px solid #fff;
    border-radius: 4px 4px 0 0;
    background: linear-gradient(to right, #3c8ae6, #99c8ff);
    font-size: 14px;
    font-weight: bold;
    color: #fff;
}

.task h2 svg {
    width: 16px;
    height: 16px;
}

.task h2 > svg {
    margin-left: auto;
}

.task h2 .fold {
    margin-left: auto;
}

.task h2 .fold svg {
    width: 14px;
    height: 14px;
}

.task-body {
    padding: 11px 12px 12px;
    background-color: #efefef;
}

.solver {
    display: grid;
    grid-template-columns: 202px 1fr auto;
    align-items: center;
}

.solver a {
    color: #0000e0;
}

.split {
    display: flex;
    height: 30px;
    border: 1px solid #a8a8a8;
    border-radius: 3px;
    background: linear-gradient(#f2f2f2, #e8e8e8);
}

.split.wide {
    flex: 1;
    margin: 0 8px 0 15px;
}

.split svg,
.eye svg {
    width: 16px;
    height: 16px;
}

.icon-part {
    width: 31px;
}

.text-part {
    flex: 1;
}

.arrow-part {
    width: 17px;
    border-left: 1px solid #a8a8a8;
}

.arrow-part svg {
    width: 12px;
    height: 12px;
}

.filter-row {
    display: flex;
    align-items: center;
    margin-bottom: 8px;
}

.check {
    appearance: none;
    flex: none;
    width: 16px;
    height: 16px;
    margin: 0;
    margin-left: 1px;
    border: 1px solid #4a90e2;
    border-radius: 3px;
    background: #bcd8fa url("data:image/svg+xml,%3Csvg xmlns='http://www.w3.org/2000/svg' viewBox='0 0 14 14'%3E%3Cpath d='M3 7l3 3 5-6' fill='none' stroke='%230b1a2c' stroke-width='2.2'/%3E%3C/svg%3E") center / 14px;
}

.eye {
    width: 30px;
    height: 30px;
    margin-right: 8px;
    border: 1px solid #a8a8a8;
    border-radius: 3px;
}

.list {
    display: flex;
    height: 190px;
    overflow: hidden;
    border: 1px solid #b0b0b0;
    border-radius: 3px;
    background-color: #fff;
}

.list ul {
    flex: 1;
    margin: 0;
    padding: 0;
    list-style: none;
}

.list label {
    display: flex;
    align-items: center;
    height: 32px;
    padding-left: 4px;
}

.list label svg {
    width: 24px;
    height: 24px;
}

.constraints svg {
    margin: 0 6px 0 8px;
}

.elements label {
    gap: 4px;
    padding-left: 5px;
}

.elements .check {
    margin-right: 4px;
}

.scroll {
    width: 21px;
    padding: 6px;
    border-left: 1px solid #d8d8d8;
}

.thumb {
    display: block;
    width: 8px;
    height: 88px;
    border: 1px solid #999;
    border-radius: 4px;
    background-color: #c0c0c0;
}

.thumb.long {
    height: 110px;
}

/* 3D view */
.documents {
    flex: 1;
    display: flex;
    flex-direction: column;
}

.viewport {
    flex: 1;
    position: relative;
    overflow: hidden;
    background: linear-gradient(#333366, #9797ac);
}

.scene {
    position: absolute;
    width: 100%;
    height: 100%;
}

.dimension {
    font: 17px "Liberation Sans", sans-serif;
    fill: #b8504e;
    stroke: #b8504e;
    stroke-width: 0.7;
    text-anchor: middle;
}

.navcube {
    position: absolute;
    top: 0;
    right: 0;
    width: 180px;
    height: 147px;
}

.cube-face {
    font: 42px "Liberation Sans", sans-serif;
    fill: #36365c;
    text-anchor: middle;
}

.axis {
    position: absolute;
    right: 4px;
    bottom: 31px;
    width: 52px;
    height: 44px;
    overflow: visible;
    font: 10px "DejaVu Sans", sans-serif;
}

.doc-tabs {
    display: flex;
    height: 29px;
}

.doc-tab {
    display: flex;
    align-items: center;
    padding: 2px 10px 0 9px;
    background-color: #c0c0c0;
}

.doc-tab.active {
    padding: 4px 11px 0 6px;
    border: 1px solid #c8c8c8;
    border-top: none;
    border-bottom: 3px solid #3f85db;
    background-color: #f6f6f6;
}

.doc-icon {
    width: 16px;
    height: 16px;
    margin-right: 8px;
}

.doc-tab a {
    color: #111;
    text-decoration: none;
}

.doc-tab button {
    margin-left: 13px;
    color: #777;
}

.doc-tab button svg {
    width: 9px;
    height: 9px;
}

/* Status bar and taskbar */
.statusbar {
    display: flex;
    align-items: center;
    height: 39px;
    padding: 0 7px 0 2px;
}

.message {
    flex: 1;
}

.notify {
    width: 14px;
    height: 14px;
    margin-right: 56px;
    background: linear-gradient(#4c86c8, #2b5998);
}

.mouse {
    width: 12px;
    height: 14px;
    margin-right: 6px;
}

.nav-style .chev {
    margin-left: 21px;
}

.size {
    margin-left: 24px;
}

.size .chev {
    margin-left: 12px;
}

.taskbar {
    display: flex;
    align-items: center;
    height: 32px;
    padding: 0 5px;
    background-color: #2d323d;
    color: #c6cdd8;
}

.taskbar svg {
    width: 20px;
    height: 20px;
}

.launcher {
    margin-right: 9px;
}

.launcher svg {
    width: 22px;
    height: 22px;
}

.desk {
    width: 18px;
    height: 26px;
    margin-right: 6px;
}

.desk.current {
    background-color: #3a404d;
    font-weight: bold;
}

.quick {
    margin: 0 6px 0 3px;
}

.window {
    justify-content: flex-start;
    gap: 3px;
    width: 196px;
    height: 32px;
    padding-left: 5px;
}

.window.focused {
    border-bottom: 2px solid #4a90e2;
    background-color: #292d37;
}

.tray {
    display: flex;
    align-items: center;
    gap: 8px;
    margin-left: auto;
}

.clip {
    margin-left: 8px;
}

.tray time {
    margin-left: 27px;
}
```
